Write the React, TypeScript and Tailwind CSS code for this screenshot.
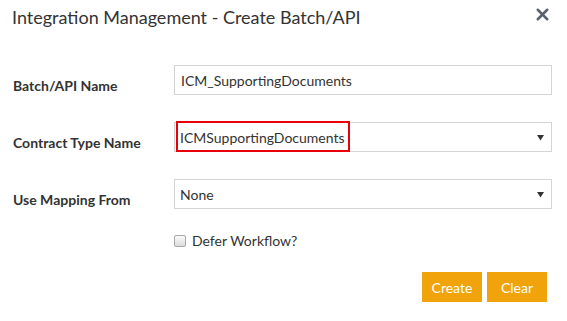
import { X } from 'lucide-react';

const font = { fontFamily: 'Lato, "Open Sans", sans-serif' };

function Caret() {
  return (
    <svg width="7" height="7" viewBox="0 0 7 7" className="shrink-0">
      <path d="M0 1 L7 1 L3.5 6.5 Z" fill="#333" />
    </svg>
  );
}

export default function App() {
  return (
    <div className="w-[567px] h-[321px] bg-white text-[#333]" style={font}>
      <div className="flex items-start justify-between pl-3 pr-[15px] pt-[6px] h-[33px]">
        <h1 className="text-[18px] leading-[22px] text-[#333]">Integration Management - Create Batch/API</h1>
        <button className="text-[#5a6270] -mt-[1px]">
          <X size={19} strokeWidth={3.2} />
        </button>
      </div>

      <form className="pl-[13px] pr-[15px] pt-[31px]">
        <div className="grid grid-cols-[161px_1fr] items-center h-[30px]">
          <label className="text-[14px] font-bold text-[#333] pt-[11px]">Batch/API Name</label>
          <div className="h-[30px] border border-[#d4d4d4] flex items-center px-[6px] text-[14px]">
            ICM_SupportingDocuments
          </div>
        </div>

        <div className="grid grid-cols-[161px_1fr] items-center h-[30px] mt-[27px]">
          <label className="text-[14px] font-bold text-[#333] pt-[11px]">Contract Type Name</label>
          <div className="relative h-[30px] border border-[#d4d4d4] flex items-center justify-between pl-[5px] pr-[7px] text-[14px]">
            <span>ICMSupportingDocuments</span>
            <Caret />
            <div className="absolute left-[1px] -top-[2px] w-[174px] h-[31px] border-2 border-[#e8000b]" />
          </div>
        </div>

        <div className="grid grid-cols-[161px_1fr] items-center h-[30px] mt-[27px]">
          <label className="text-[14px] font-bold text-[#333] pt-[11px]">Use Mapping From</label>
          <div className="h-[30px] border border-[#d4d4d4] flex items-center justify-between pl-[5px] pr-[7px] text-[14px]">
            <span>None</span>
            <Caret />
          </div>
        </div>

        <div className="grid grid-cols-[161px_1fr] items-center h-[20px] mt-[22px]">
          <div />
          <label className="flex items-center gap-[6px] text-[14px]">
            <span className="w-[12px] h-[12px] rounded-[2px] border border-[#a9a9a9] bg-gradient-to-b from-[#fafafa] to-[#dcdcdc]" />
            Defer Workflow?
          </label>
        </div>

        <div className="flex justify-end gap-[5px] mt-[22px] pr-[5px]">
          <button type="button" className="w-[60px] h-[30px] bg-[#f0a30a] text-white text-[14px]">
            Create
          </button>
          <button type="button" className="w-[60px] h-[30px] bg-[#f0a30a] text-white text-[14px]">
            Clear
          </button>
        </div>
      </form>
    </div>
  );
}
